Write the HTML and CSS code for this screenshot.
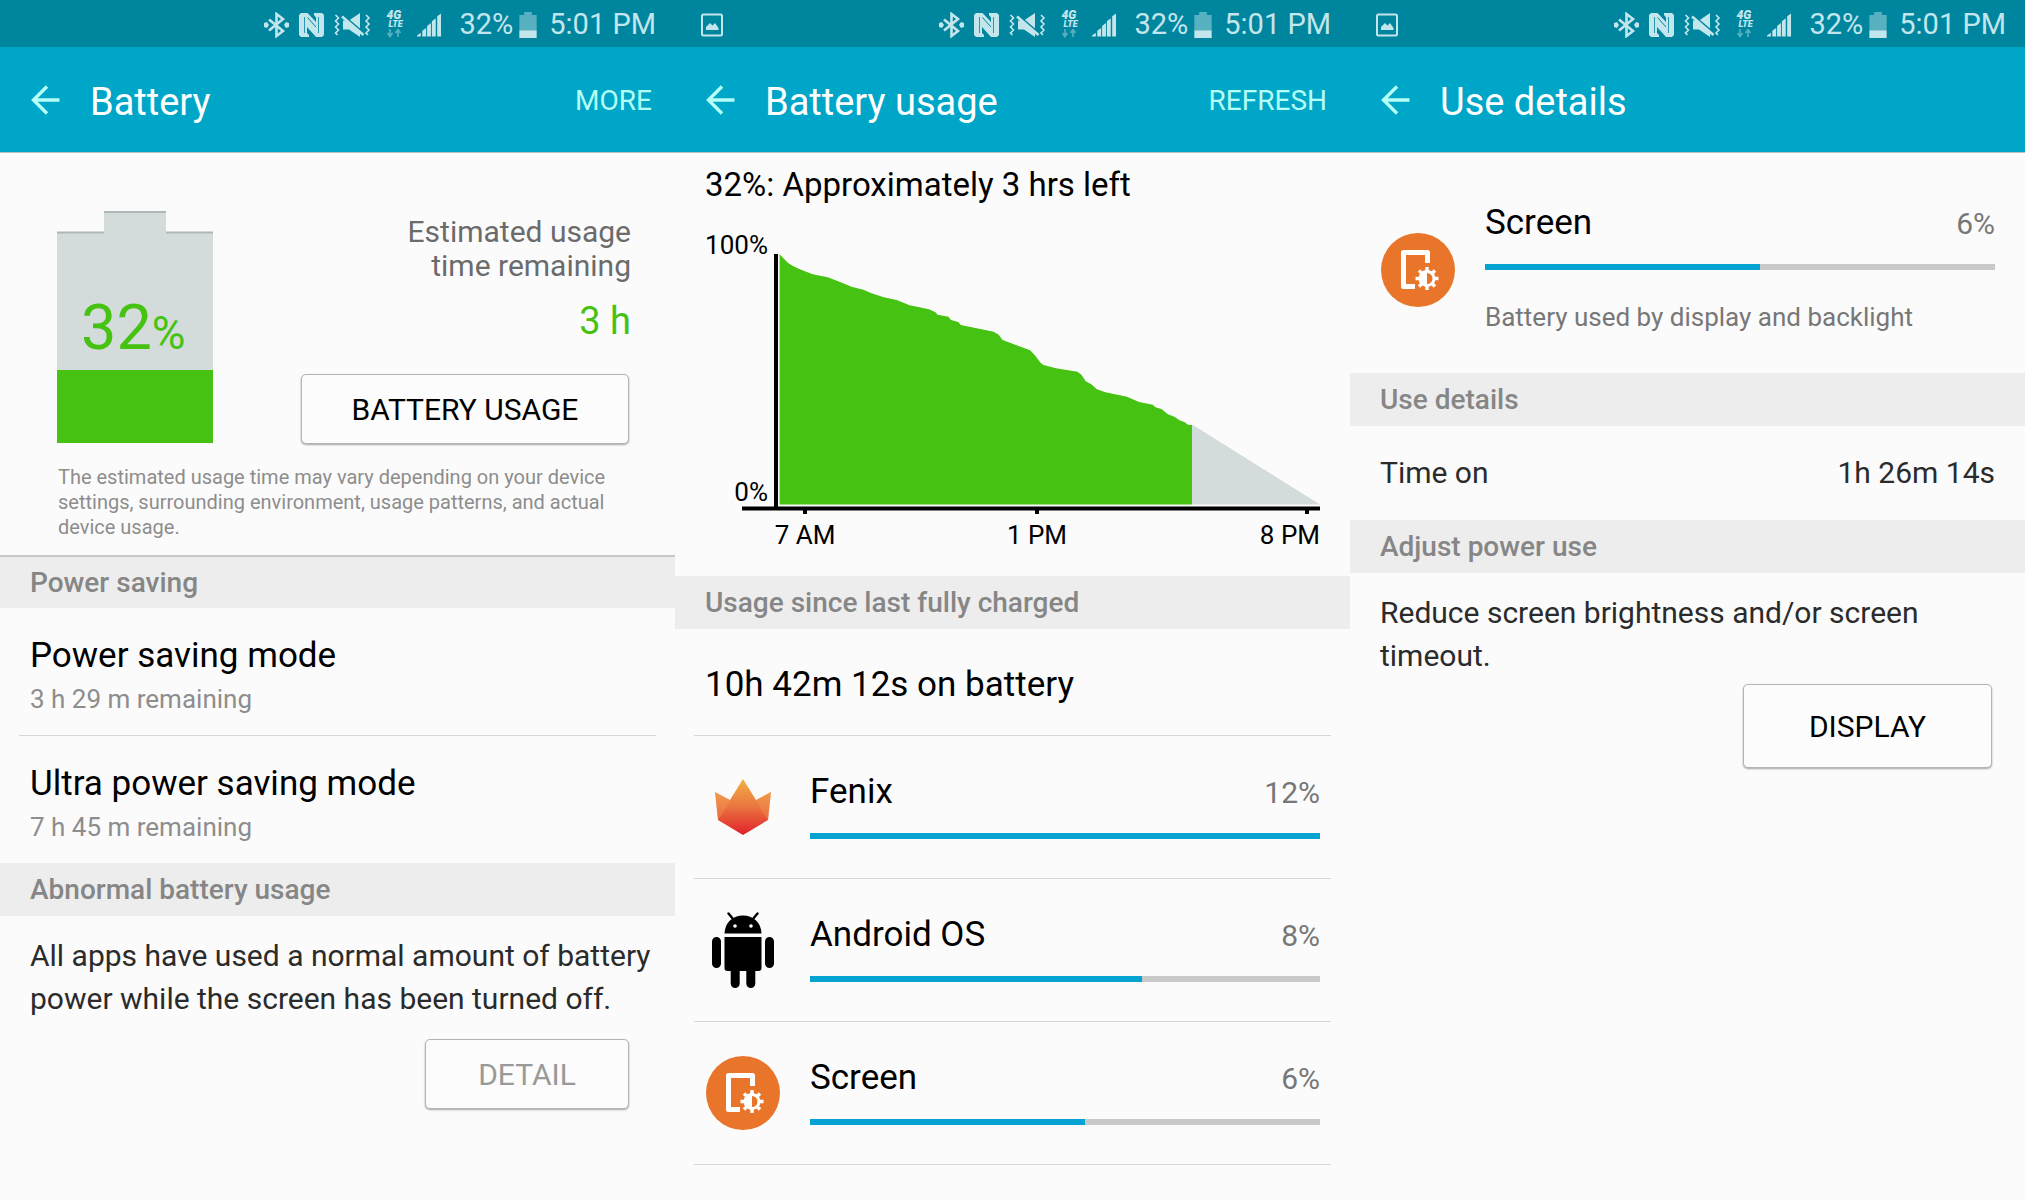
FILE: index.html
```html
<!DOCTYPE html>
<html lang="en">
<head>
<meta charset="utf-8">
<meta name="viewport" content="width=device-width, initial-scale=1">
<title>Battery</title>
<link rel="stylesheet" href="styles.css">
</head>
<body>
<svg class="defs" aria-hidden="true">
  <defs>
    <linearGradient id="flame" x1="0" y1="0" x2="0" y2="1">
      <stop offset="0" stop-color="#f2b144"/>
      <stop offset=".5" stop-color="#ea7440"/>
      <stop offset="1" stop-color="#e0202a"/>
    </linearGradient>
  </defs>
  <symbol id="i-bluetooth" viewBox="0 0 25 26">
    <path d="M5 7.500l14 11.500-6.500 5V2l6.500 5L5 18.500" fill="none" stroke="currentColor" stroke-width="2.600"/>
    <path d="M0 11l3-1 2 3-2 3-3-1zM25 11l-3-1-2 3 2 3 3-1z" fill="currentColor"/>
  </symbol>
  <symbol id="i-nfc" viewBox="0 0 25 24">
    <path d="M2 0H8.500L17 9V4.500L15 2V0H23L25 2V22L23 24H17L8 14V20L10 22V24H2L0 22V2z" fill="currentColor"/>
    <path d="M5.500 4V20M19.500 4V20" fill="none" stroke="#00859f" stroke-width=".8"/>
    <path d="M8.500 4.500L17 14" fill="none" stroke="#00859f" stroke-width="1"/>
  </symbol>
  <symbol id="i-mute" viewBox="0 0 37 26">
    <path d="M9 8.500h6L26 1v24L15 17.500H9z" fill="currentColor"/>
    <path d="M8 2.500L30 21" stroke="#00859f" stroke-width="2"/>
    <path d="M8 4.500L29.500 23" stroke="currentColor" stroke-width="2.600"/>
    <path d="M1.500 3l3 3-3 3 3 3-3 3 3 3-3 3 2 2M32 3l3 3-3 3 3 3-3 3 3 3-3 3 2 2" fill="none" stroke="currentColor" stroke-width="1.600"/>
  </symbol>
  <symbol id="i-data" viewBox="0 0 18 9">
    <path d="M4 0v7M1.500 4L4 7.500 6.500 4M12 8V1M9.500 4L12 .5 14.500 4" fill="none" stroke="currentColor" stroke-width="1.600" opacity=".45"/>
  </symbol>
  <symbol id="i-signal" viewBox="0 0 26 26">
    <path d="M0 25v-1l4-3v4zM5.500 25v-6l4-3v9zM10.500 25V14l4-3v14zM15.500 25V9l4-3v19zM21 25V4L25 1v24z" fill="currentColor"/>
  </symbol>
  <symbol id="i-battery" viewBox="0 0 18 27">
    <path d="M5 0h8v3h5v16H0V3h5z" fill="currentColor" opacity=".45"/>
    <path d="M0 19h18v8H0z" fill="currentColor"/>
  </symbol>
  <symbol id="i-image" viewBox="0 0 22 24">
    <rect x="1" y="1.500" width="20" height="21" rx="1.500" fill="none" stroke="currentColor" stroke-width="2"/>
    <path d="M5 17v-3l4-4 2.500 2.500L14 10l3.500 5v2z" fill="currentColor"/>
  </symbol>
  <symbol id="i-back" viewBox="0 0 29 30">
    <path d="M28.500 15H2.500M16 1.500L2.500 15 16 28.500" fill="none" stroke="currentColor" stroke-width="3.400"/>
  </symbol>
  <symbol id="i-screen" viewBox="0 0 74 74">
    <circle cx="37" cy="37" r="37" fill="#e9752b"/>
    <path d="M46.500 30V19.500H22.500V53.500H34" fill="none" stroke="#fff" stroke-width="5" stroke-linejoin="round"/>
    <path d="M46 34v4M46 53v4M34.500 45.500h4M53.500 45.500h4M38 37.500l3 3M51 50.500l3 3M54 37.500l-3 3M41 50.500l-3 3" stroke="#fff" stroke-width="3.400"/>
    <circle cx="46" cy="45.500" r="7" fill="#e9752b" stroke="#fff" stroke-width="3"/>
    <path d="M46 38.500a7 7 0 0 0 0 14z" fill="#fff"/>
  </symbol>
</svg>

<main class="screens">
  <section class="screen" aria-label="Battery">
    <div class="status">
      <svg class="w25"><use href="#i-bluetooth"/></svg>
      <svg class="w25"><use href="#i-nfc"/></svg>
      <svg class="w37"><use href="#i-mute"/></svg>
      <span class="network"><b>4G</b><b class="lte">LTE</b><svg><use href="#i-data"/></svg></span>
      <svg class="w25"><use href="#i-signal"/></svg>
      <span class="level">32%</span>
      <svg class="w18"><use href="#i-battery"/></svg>
      <span class="clock">5:01 PM</span>
    </div>
    <header class="appbar">
      <button class="back" type="button" aria-label="Back"><svg><use href="#i-back"/></svg></button>
      <h1>Battery</h1>
      <button class="action" type="button">MORE</button>
    </header>

    <div class="summary">
      <svg class="gauge" viewBox="0 0 156 232" role="img" aria-label="32%">
        <path d="M0 21H47V0H109V21H156V232H0z" fill="#d3dcdb"/>
        <path d="M0 21.500H47M47 1H109M109 21.500H156" stroke="#aeb8b8" stroke-width="2"/>
        <path d="M0 159H156V232H0z" fill="#46c212"/>
        <text x="24" y="138" class="gauge-text">32<tspan class="gauge-unit">%</tspan></text>
      </svg>
      <div class="estimate">
        <p>Estimated usage<br>time remaining</p>
        <strong>3 h</strong>
        <button class="btn" type="button">BATTERY USAGE</button>
      </div>
      <p class="note">The estimated usage time may vary depending on your device settings, surrounding environment, usage patterns, and actual device usage.</p>
    </div>

    <h2 class="section ruled">Power saving</h2>
    <ul class="list">
      <li class="mode"><span class="name">Power saving mode</span><span class="sub">3 h 29 m remaining</span></li>
      <li class="mode"><span class="name">Ultra power saving mode</span><span class="sub">7 h 45 m remaining</span></li>
    </ul>
    <h2 class="section">Abnormal battery usage</h2>
    <p class="body">All apps have used a normal amount of battery power while the screen has been turned off.</p>
    <button class="btn detail" type="button" disabled>DETAIL</button>
  </section>

  <section class="screen" aria-label="Battery usage">
    <div class="status">
      <svg class="w22 notice"><use href="#i-image"/></svg>
      <svg class="w25"><use href="#i-bluetooth"/></svg>
      <svg class="w25"><use href="#i-nfc"/></svg>
      <svg class="w37"><use href="#i-mute"/></svg>
      <span class="network"><b>4G</b><b class="lte">LTE</b><svg><use href="#i-data"/></svg></span>
      <svg class="w25"><use href="#i-signal"/></svg>
      <span class="level">32%</span>
      <svg class="w18"><use href="#i-battery"/></svg>
      <span class="clock">5:01 PM</span>
    </div>
    <header class="appbar">
      <button class="back" type="button" aria-label="Back"><svg><use href="#i-back"/></svg></button>
      <h1>Battery usage</h1>
      <button class="action" type="button">REFRESH</button>
    </header>

    <p class="forecast">32%: Approximately 3 hrs left</p>
    <svg class="chart" viewBox="0 207 675 369" role="img" aria-label="Battery level over time">
      <path fill="#46c212" d="M104.600 504.500V254.300L112.800 262.700 118 266 124.800 269.300 137.800 274.300 152.800 277.300 165.700 282.300 176.500 286.700 188.500 289.700 195.900 293 208.800 297.300 221.700 300 234.600 305.300 254 309.300 260.400 312.300 262.600 314.700 273.400 316.700 276 320 283.300 322 285.800 325 318.600 331.700 323.700 334.700 327.600 340 355.100 350.300 360.300 355.700 365.500 362.700 368.500 365 381 368.300 402.500 371.700 406.400 374.700 410.700 381.300 416.300 384.300 421.900 389.300 430.500 392.300 452 396.700 464.100 402 477.800 404.700 480.400 407.300 486.400 409 492.900 414.300 499.400 416.700 504.500 420.300 509.300 422 513 424.700 517 425V504.500z"/>
      <path fill="#d3dcdb" d="M517 425h1L645 504.500H517z"/>
      <path d="M101 254V508M67 508.500H645M130 508v6M362 508v6M632 508v6" stroke="#000" stroke-width="4"/>
      <g class="chart-text">
        <text x="93" y="254" text-anchor="end">100%</text>
        <text x="93" y="501" text-anchor="end">0%</text>
        <text x="130" y="544" text-anchor="middle">7 AM</text>
        <text x="362" y="544" text-anchor="middle">1 PM</text>
        <text x="645" y="544" text-anchor="end">8 PM</text>
      </g>
    </svg>

    <h2 class="section">Usage since last fully charged</h2>
    <ul class="list">
      <li class="elapsed name">10h 42m 12s on battery</li>
      <li class="app">
        <svg class="app-icon" viewBox="0 0 74 74">
          <path d="M37 9L50 30 65 22 62 50 37 65 12 50 9 22 24 30z" fill="url(#flame)"/>
          <path d="M9 22L24 30 15 46 12 50zM65 22L50 30 59 46 62 50z" fill="#f4a45a" opacity=".3"/>
        </svg>
        <div class="usage">
          <div class="line"><span class="name">Fenix</span><span class="pct">12%</span></div>
          <div class="bar"><div class="bar-fill" style="width:100%"></div></div>
        </div>
      </li>
      <li class="app">
        <svg class="app-icon" viewBox="0 0 74 76">
          <path d="M18.500 21.500C19 10 27 3.500 37 3.500S55 10 55.500 21.500z"/>
          <path d="M22.500 1.500l5 6M51.500 1.500l-5 6" stroke="#000" stroke-width="2.400" stroke-linecap="round"/>
          <path d="M18.500 25h37v31q0 3-3 3h-31q-3 0-3-3z"/>
          <path d="M10.500 29.500v22M63.500 29.500v22M29.200 55v16.500M44.800 55v16.500" stroke="#000" stroke-width="9" stroke-linecap="round"/>
          <circle cx="29" cy="14" r="1.800" fill="#fff"/><circle cx="45" cy="14" r="1.800" fill="#fff"/>
        </svg>
        <div class="usage">
          <div class="line"><span class="name">Android OS</span><span class="pct">8%</span></div>
          <div class="bar"><div class="bar-fill" style="width:65%"></div></div>
        </div>
      </li>
      <li class="app">
        <svg class="app-icon"><use href="#i-screen"/></svg>
        <div class="usage">
          <div class="line"><span class="name">Screen</span><span class="pct">6%</span></div>
          <div class="bar"><div class="bar-fill" style="width:54%"></div></div>
        </div>
      </li>
      <li class="app" aria-hidden="true">
        <svg class="app-icon" viewBox="0 0 74 74"><circle cx="37" cy="37" r="36" fill="#d9d9d9"/></svg>
      </li>
    </ul>
  </section>

  <section class="screen" aria-label="Use details">
    <div class="status">
      <svg class="w22 notice"><use href="#i-image"/></svg>
      <svg class="w25"><use href="#i-bluetooth"/></svg>
      <svg class="w25"><use href="#i-nfc"/></svg>
      <svg class="w37"><use href="#i-mute"/></svg>
      <span class="network"><b>4G</b><b class="lte">LTE</b><svg><use href="#i-data"/></svg></span>
      <svg class="w25"><use href="#i-signal"/></svg>
      <span class="level">32%</span>
      <svg class="w18"><use href="#i-battery"/></svg>
      <span class="clock">5:01 PM</span>
    </div>
    <header class="appbar">
      <button class="back" type="button" aria-label="Back"><svg><use href="#i-back"/></svg></button>
      <h1>Use details</h1>
    </header>

    <div class="app hero">
      <svg class="app-icon"><use href="#i-screen"/></svg>
      <div class="usage">
        <div class="line"><span class="name">Screen</span><span class="pct">6%</span></div>
        <div class="bar"><div class="bar-fill" style="width:54%"></div></div>
        <p class="about">Battery used by display and backlight</p>
      </div>
    </div>

    <h2 class="section">Use details</h2>
    <div class="fact"><span>Time on</span><span>1h 26m 14s</span></div>
    <h2 class="section">Adjust power use</h2>
    <p class="body">Reduce screen brightness and/or screen timeout.</p>
    <button class="btn display" type="button">DISPLAY</button>
  </section>
</main>
</body>
</html>
```
FILE: styles.css
```css
* { box-sizing: border-box; }

body {
  margin: 0;
  background: #fbfbfb;
  color: #000;
  font-family: Roboto, "Liberation Sans", sans-serif;
}

h1, h2, p, ul { margin: 0; padding: 0; font-weight: 400; }
ul { list-style: none; }
button { font-family: inherit; padding: 0; cursor: pointer; }
svg { display: block; flex: none; }
.defs { position: absolute; width: 0; height: 0; }

.screens {
  display: grid;
  grid-template-columns: repeat(3, 1fr);
  height: 100vh;
  overflow: hidden;
}
.screen { display: flex; flex-direction: column; min-width: 0; min-height: 0; }
.screen > * { flex: none; }

/* Status bar */
.status {
  display: flex;
  align-items: center;
  justify-content: flex-end;
  gap: 10px;
  height: 47px;
  padding: 2px 19px 0 26px;
  background: #00859f;
  color: #c3e6ec;
  font-size: 29px;
  line-height: 45px;
}
.status svg { height: 26px; }
.status .notice { height: 24px; margin-right: auto; }
.w18 { width: 18px; }
.w22 { width: 22px; }
.w25 { width: 25px; }
.w37 { width: 37px; }
.network { display: flex; flex-direction: column; width: 18px; margin: 0 3px 0 5px; }
.network b { font-size: 12px; font-style: italic; font-weight: 900; line-height: 9px; }
.network .lte { padding-left: 2px; font-size: 9px; }
.status .network svg { width: 18px; height: 9px; }
.level { margin: 0 -4px 0 7px; }
.clock { margin-left: 2px; }

/* App bar */
.appbar {
  display: flex;
  align-items: center;
  height: 105px;
  padding: 0 23px 0 31px;
  background: #00a6c7;
  box-shadow: 0 1px 0 #b9c3c5;
}
.back { border: 0; background: none; color: #b4fff6; }
.back svg { width: 29px; height: 30px; }
.appbar h1 {
  flex: 1;
  padding: 4px 0 0 30px;
  color: #fff;
  font-size: 38px;
  line-height: 44px;
}
.action { padding-top: 2px; border: 0; background: none; color: #b4fff6; font-size: 28px; line-height: 44px; }

/* Shared rows */
.section {
  height: 53px;
  padding: 0 30px;
  background: #ededed;
  color: #868686;
  font-size: 28px;
  font-weight: 500;
  line-height: 53px;
}
.ruled { border-top: 2px solid #c6c9c9; line-height: 51px; }
.name { font-size: 35px; line-height: 44px; }
.body { padding: 18px 20px 0 30px; color: #2b2b2b; font-size: 30px; line-height: 43px; }
.btn {
  height: 70px;
  border: 1px solid #b4b4b4;
  border-radius: 5px;
  background: #fcfcfc;
  box-shadow: 0 1px 2px rgba(0, 0, 0, .35);
  color: #000;
  font-size: 30px;
}
.detail { align-self: flex-end; width: 204px; margin: 19px 46px 0 0; color: #999; }
.display { align-self: flex-end; width: 249px; height: 84px; margin: 7px 33px 0 0; }

/* Battery summary */
.summary {
  display: grid;
  grid-template-columns: 156px 1fr;
  padding: 59px 44px 15px 57px;
}
.gauge { width: 156px; height: 232px; }
.gauge-text { fill: #46c212; font-size: 63px; }
.gauge-unit { font-size: 46px; }
.estimate { display: flex; flex-direction: column; align-items: flex-end; padding-top: 4px; }
.estimate p { color: #6b6b6b; font-size: 30px; line-height: 34px; text-align: right; }
.estimate strong { margin: 13px 0 28px; color: #46c212; font-size: 38px; font-weight: 400; line-height: 50px; }
.estimate .btn { width: 328px; margin-right: 2px; }
.note {
  grid-column: 1 / -1;
  padding: 21px 0 0 1px;
  color: #8d8d8d;
  font-size: 20px;
  line-height: 25px;
}
.mode { display: flex; flex-direction: column; margin: 0 19px; padding: 26px 11px 15px; }
.mode + .mode { border-top: 1px solid #d6d6d6; }
.sub { color: #8d8d8d; font-size: 26px; line-height: 42px; }

/* Usage list */
.forecast { padding: 11px 30px 0; font-size: 33px; line-height: 44px; }
.chart { width: 100%; }
.chart-text { font-size: 26px; }
.elapsed { padding: 34px 30px 28px; }
.app {
  display: flex;
  align-items: center;
  gap: 30px;
  min-height: 143px;
  margin: 0 19px;
  padding: 0 11px 0 12px;
}
.list .app { border-top: 1px solid #d6d6d6; }
.list .usage { padding-bottom: 5px; }
.app-icon { width: 74px; height: 76px; }
.usage { flex: 1; }
.line { display: flex; justify-content: space-between; align-items: baseline; }
.pct { color: #777; font-size: 30px; line-height: 40px; }
.bar { height: 6px; margin-top: 19px; background: #c8c8c8; }
.bar-fill { height: 100%; background: #05a2d2; }

/* Use details */
.hero { padding-top: 49px; padding-bottom: 34px; }
.about { margin-top: 25px; color: #777; font-size: 26px; line-height: 44px; }
.fact {
  display: flex;
  justify-content: space-between;
  padding: 25px 30px 26px;
  color: #2b2b2b;
  font-size: 30px;
  line-height: 43px;
}
```
